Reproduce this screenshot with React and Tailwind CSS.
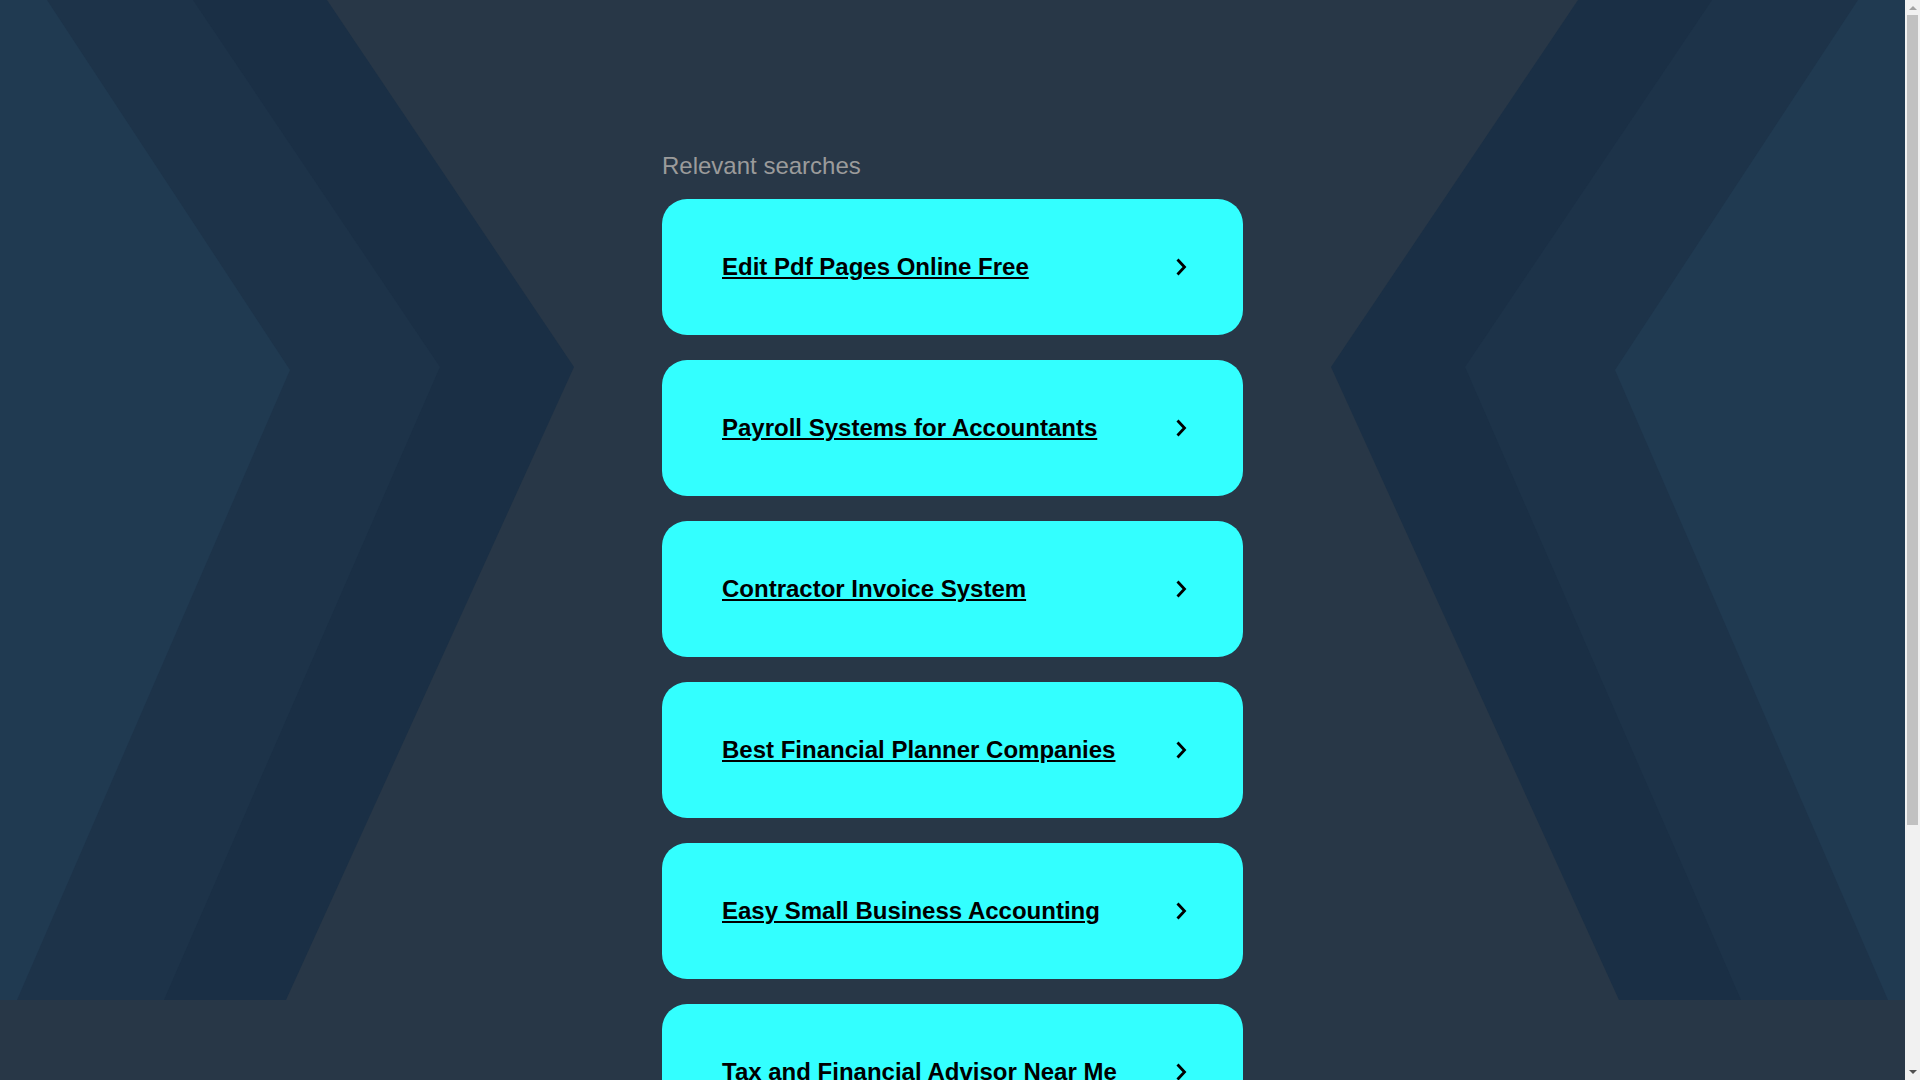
import React from 'react';

const searches = [
  'Edit Pdf Pages Online Free',
  'Payroll Systems for Accountants',
  'Contractor Invoice System',
  'Best Financial Planner Companies',
  'Easy Small Business Accounting',
  'Tax and Financial Advisor Near Me',
];

function Backdrop() {
  const W = 1905;
  const mirror = (pts) =>
    pts
      .split(' ')
      .map((p) => {
        const [x, y] = p.split(',').map(Number);
        return `${W - x},${y}`;
      })
      .join(' ');
  const outer = '0,0 327,0 574,367 286,1000 0,1000';
  const middle = '0,0 193,0 440,367 164,1000 0,1000';
  const inner = '0,0 47,0 290,370 17,1000 0,1000';
  return (
    <svg
      className="absolute top-0 left-0 w-full h-[1000px]"
      viewBox={`0 0 ${W} 1000`}
      preserveAspectRatio="none"
    >
      <polygon points={outer} fill="#1a2f45" />
      <polygon points={middle} fill="#1d3349" />
      <polygon points={inner} fill="#203a51" />
      <polygon points={mirror(outer)} fill="#1a2f45" />
      <polygon points={mirror(middle)} fill="#1d3349" />
      <polygon points={mirror(inner)} fill="#203a51" />
    </svg>
  );
}

function Chevron() {
  return (
    <svg width="12" height="20" viewBox="0 0 12 20" className="shrink-0">
      <path d="M2.5 2.5 L9.5 10 L2.5 17.5" fill="none" stroke="#000" strokeWidth="2.8" strokeLinejoin="miter" />
    </svg>
  );
}

// browser-style vertical scrollbar
function ScrollRail() {
  return (
    <div className="w-[15px] h-screen shrink-0 bg-[#f1f1f1] flex flex-col items-center">
      <div className="h-[15px] w-full flex items-center justify-center">
        <svg width="8" height="5" viewBox="0 0 8 5">
          <polygon points="0,5 4,1 8,5" fill="#a3a3a3" />
        </svg>
      </div>
      <div className="w-[11px] h-[810px] bg-[#c1c1c1]" />
      <div className="flex-1" />
      <div className="h-[15px] w-full flex items-center justify-center">
        <svg width="8" height="5" viewBox="0 0 8 5">
          <polygon points="0,0 8,0 4,4" fill="#505050" />
        </svg>
      </div>
    </div>
  );
}

export default function App() {
  return (
    <div className="flex h-screen overflow-hidden bg-[#283747] font-['Liberation_Sans',Arial,sans-serif]">
      <div className="flex-1 h-screen overflow-y-auto">
        <div className="relative min-h-[1400px]">
          <Backdrop />
          <div className="relative flex justify-center pt-[152px] pb-[260px]">
            <div className="w-[581px]">
              <h2 className="text-[24px] leading-[28px] text-[#9b9b9b] font-normal mb-[19px]">Relevant searches</h2>
              <div className="flex flex-col gap-[25px]">
                {searches.map((s) => (
                  <a
                    key={s}
                    href="#"
                    className="flex items-center justify-between h-[136px] rounded-[25px] bg-[#33ffff] pl-[60px] pr-[56px]"
                  >
                    <span className="text-[24px] leading-[28px] font-bold text-black underline">{s}</span>
                    <Chevron />
                  </a>
                ))}
              </div>
            </div>
          </div>
        </div>
      </div>
      <ScrollRail />
    </div>
  );
}
